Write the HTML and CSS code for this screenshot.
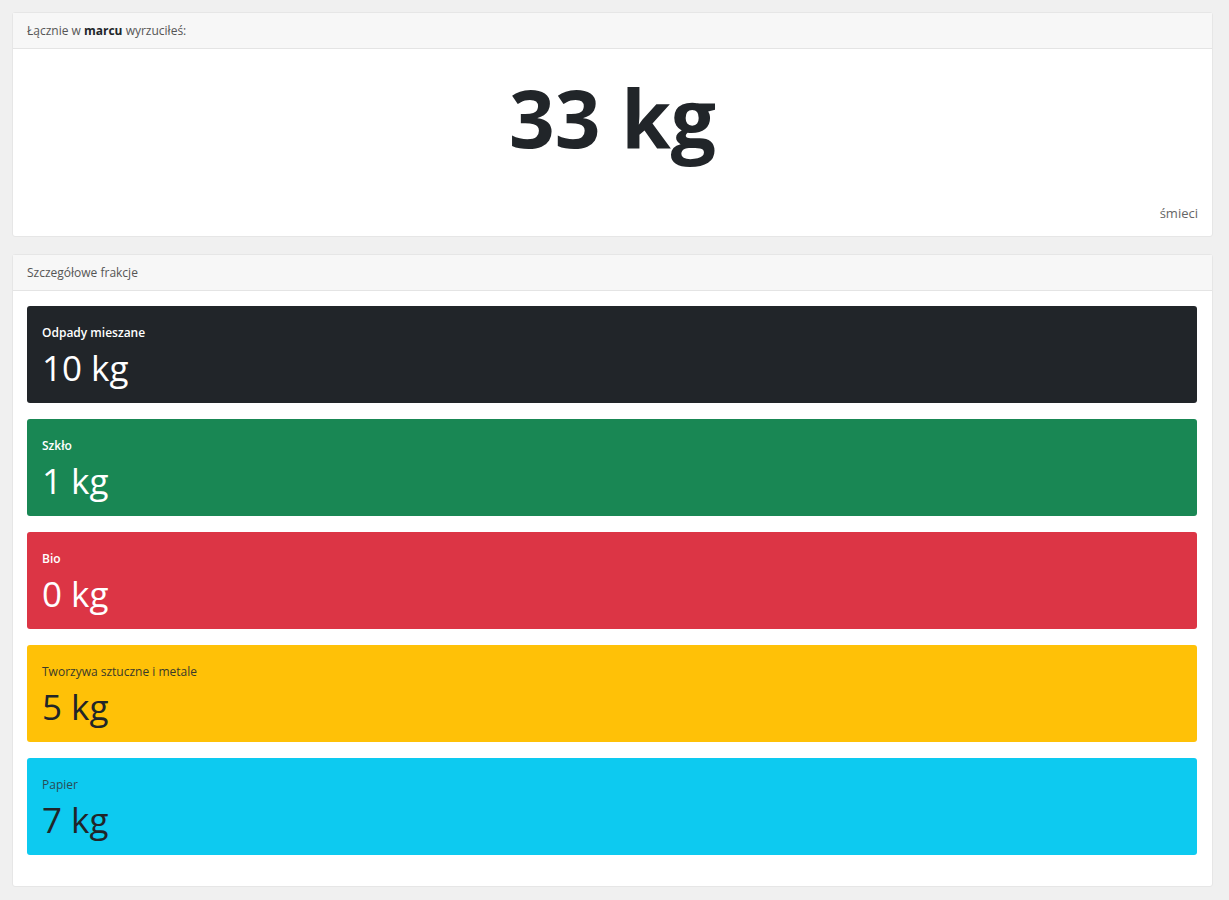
FILE: index.html
```html
<!DOCTYPE html>
<html lang="pl">
<head>
<meta charset="utf-8">
<title>Śmieci</title>
<link rel="stylesheet" href="styles.css">
</head>
<body>
<main class="page">
  <section class="card">
    <header class="card-header">Łącznie w <strong>marcu</strong> wyrzuciłeś:</header>
    <div class="card-body total-body">
      <div class="total">33 kg</div>
      <div class="total-note">śmieci</div>
    </div>
  </section>
  <section class="card">
    <header class="card-header">Szczegółowe frakcje</header>
    <div class="card-body fractions">
      <div class="fraction dark"><div class="f-label">Odpady mieszane</div><div class="f-value">10 kg</div></div>
      <div class="fraction green"><div class="f-label">Szkło</div><div class="f-value">1 kg</div></div>
      <div class="fraction red"><div class="f-label">Bio</div><div class="f-value">0 kg</div></div>
      <div class="fraction yellow"><div class="f-label">Tworzywa sztuczne i metale</div><div class="f-value">5 kg</div></div>
      <div class="fraction cyan"><div class="f-label">Papier</div><div class="f-value">7 kg</div></div>
    </div>
  </section>
</main>
</body>
</html>
```

FILE: styles.css
```css
html, body {
  margin: 0;
  padding: 0;
  background: #f0f0f0;
  font-family: "Open Sans", "Noto Sans", "Liberation Sans", sans-serif;
  color: #212529;
}
.page {
  display: flex;
  flex-direction: column;
  gap: 17px;
  padding: 12px 16px 12px 12px;
}
.card {
  background: #fff;
  border: 1px solid #e6e6e6;
  border-radius: 3px;
}
.card-header {
  background: #f7f7f7;
  border-bottom: 1px solid #e4e4e4;
  height: 35px;
  line-height: 35px;
  padding: 0 14px;
  font-size: 12px;
  color: #555;
}
.card-header strong {
  color: #212529;
  font-weight: 700;
}
.total-body {
  height: 187px;
  display: flex;
  flex-direction: column;
  padding: 0 14px;
}
.total {
  text-align: center;
  font-size: 80px;
  font-weight: 700;
  line-height: 1;
  margin-top: 28px;
}
.total-note {
  margin-top: auto;
  margin-bottom: 14px;
  text-align: right;
  font-size: 13px;
  color: #666;
}
.fractions {
  display: flex;
  flex-direction: column;
  gap: 16px;
  padding: 15px 15px 31px 14px;
}
.fraction {
  height: 97px;
  box-sizing: border-box;
  border-radius: 3px;
  padding: 18px 15px 0;
  color: #fff;
}
.f-label {
  font-size: 12px;
  line-height: 18px;
  font-weight: 600;
}
.f-value {
  font-size: 35px;
  line-height: 48px;
  margin-top: 2px;
}
.dark { background: #212529; }
.green { background: #198754; }
.red { background: #dc3545; }
.yellow { background: #ffc107; color: #212529; }
.cyan { background: #0dcaf0; color: #212529; }
.yellow .f-label, .cyan .f-label { font-weight: 400; color: #3a3a2a; }
.cyan .f-label { color: #2a4a55; }
```
